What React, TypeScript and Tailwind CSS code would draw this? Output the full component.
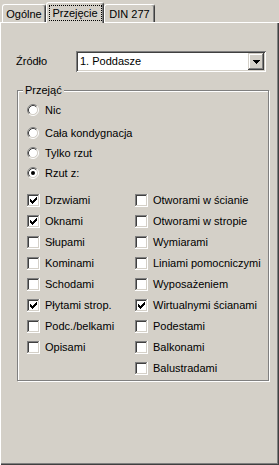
import type { ReactNode } from "react";

const LEFT = [
  { label: "Drzwiami", on: true },
  { label: "Oknami", on: true },
  { label: "Słupami", on: false },
  { label: "Kominami", on: false },
  { label: "Schodami", on: false },
  { label: "Płytami strop.", on: true },
  { label: "Podc./belkami", on: false },
  { label: "Opisami", on: false },
];

const RIGHT = [
  { label: "Otworami w ścianie", on: false },
  { label: "Otworami w stropie", on: false },
  { label: "Wymiarami", on: false },
  { label: "Liniami pomocniczymi", on: false },
  { label: "Wyposażeniem", on: false },
  { label: "Wirtualnymi ścianami", on: true },
  { label: "Podestami", on: false },
  { label: "Balkonami", on: false },
  { label: "Balustradami", on: false },
];

const CHECK_COLS: [number, number][] = [
  [3, 5],
  [4, 6],
  [5, 7],
  [6, 6],
  [7, 5],
  [8, 4],
  [9, 3],
];

function CheckBox({ on }: { on: boolean }) {
  return (
    <svg width="13" height="13" viewBox="0 0 13 13" className="shrink-0" shapeRendering="crispEdges">
      <rect x="0" y="0" width="13" height="13" fill="#ffffff" />
      <path d="M0 0.5H12M0.5 0V12" stroke="#808080" />
      <path d="M1 1.5H11M1.5 1V11" stroke="#404040" />
      <path d="M1 11.5H12M11.5 1V12" stroke="#d4d0c8" />
      <path d="M0 12.5H13M12.5 0V13" stroke="#ffffff" />
      {on && CHECK_COLS.map(([x, y]) => <rect key={x} x={x} y={y} width="1" height="3" fill="#000" />)}
    </svg>
  );
}

function Radio({ on }: { on: boolean }) {
  return (
    <svg width="12" height="12" viewBox="0 0 12 12" className="shrink-0">
      <circle cx="6" cy="6" r="4.5" fill="#ffffff" />
      <path d="M2.11 9.89A5.5 5.5 0 0 1 9.89 2.11" stroke="#808080" fill="none" />
      <path d="M2.82 9.18A4.5 4.5 0 0 1 9.18 2.82" stroke="#404040" fill="none" />
      <path d="M9.89 2.11A5.5 5.5 0 0 1 2.11 9.89" stroke="#ffffff" fill="none" />
      <path d="M9.18 2.82A4.5 4.5 0 0 1 2.82 9.18" stroke="#d4d0c8" fill="none" />
      {on && <circle cx="6" cy="6" r="2" fill="#000" />}
    </svg>
  );
}

function RadioRow({ label, on, className }: { label: string; on?: boolean; className?: string }) {
  return (
    <div className={`flex h-[20px] items-center gap-[6px] ${className ?? ""}`}>
      <Radio on={!!on} />
      <span>{label}</span>
    </div>
  );
}

function CheckRow({ label, on }: { label: string; on: boolean }) {
  return (
    <div className="flex h-[21px] items-center gap-[5px] whitespace-nowrap">
      <CheckBox on={on} />
      <span>{label}</span>
    </div>
  );
}

function Tab({ children, selected, w }: { children: ReactNode; selected?: boolean; w: string }) {
  return (
    <div
      className={
        selected
          ? `relative z-10 mb-[-1px] flex h-[21px] ${w} items-center justify-center rounded-t-[3px] border-l border-t border-r border-l-white border-t-white border-r-[#404040] bg-[#d4d0c8] shadow-[inset_-1px_0_#808080]`
          : `flex h-[18px] ${w} items-center justify-center rounded-t-[3px] border-l border-t border-r border-l-white border-t-white border-r-[#404040] pt-[1px] shadow-[inset_-1px_0_#808080]`
      }
    >
      {children}
    </div>
  );
}

export default function App() {
  return (
    <div
      className="flex h-[465px] w-[279px] flex-col bg-[#d4d0c8] text-[11px] leading-none text-black"
      style={{ fontFamily: '"Liberation Sans", Arial, sans-serif' }}
    >
      <div className="flex h-[22px] shrink-0 items-end pl-[2px]">
        <Tab w="w-[44px]">Ogólne</Tab>
        <Tab w="w-[58px]" selected>
          <span className="flex h-[16px] w-[53px] items-center justify-center border border-dotted border-black">
            Przejęcie
          </span>
        </Tab>
        <Tab w="w-[51px]">DIN 277</Tab>
      </div>

      <div className="flex flex-1 flex-col border-l border-t border-l-white border-t-white shadow-[inset_-1px_-1px_#404040,inset_-2px_-2px_#808080]">
        <div className="mt-[28px] flex items-center pl-[15px]">
          <span className="w-[60px]">Źródło</span>
          <div className="flex h-[21px] w-[190px] items-stretch bg-white p-[2px] shadow-[inset_1px_1px_#808080,inset_-1px_-1px_#ffffff,inset_2px_2px_#404040,inset_-2px_-2px_#d4d0c8]">
            <div className="flex flex-1 items-center pl-[2px]">1. Poddasze</div>
            <div className="flex w-[16px] items-center justify-center bg-[#d4d0c8] shadow-[inset_-1px_-1px_#404040,inset_1px_1px_#d4d0c8,inset_-2px_-2px_#808080,inset_2px_2px_#ffffff]">
              <svg width="7" height="4" viewBox="0 0 7 4" shapeRendering="crispEdges">
                <path d="M0 0H7L3.5 4Z" fill="#000" />
              </svg>
            </div>
          </div>
        </div>

        <div className="relative ml-[16px] mt-[18px] h-[291px] w-[252px] border border-[#808080] pl-[9px] pt-[9px] shadow-[inset_1px_1px_#ffffff,1px_1px_#ffffff]">
          <span className="absolute left-[5px] top-[-6px] bg-[#d4d0c8] px-[2px]">Przejąć</span>
          <RadioRow label="Nic" />
          <RadioRow label="Cała kondygnacja" className="mt-[3px]" />
          <RadioRow label="Tylko rzut" />
          <RadioRow label="Rzut z:" on />
          <div className="mt-[7px] grid grid-cols-[108px_1fr]">
            <div className="flex flex-col">
              {LEFT.map((c) => (
                <CheckRow key={c.label} label={c.label} on={c.on} />
              ))}
            </div>
            <div className="flex flex-col">
              {RIGHT.map((c) => (
                <CheckRow key={c.label} label={c.label} on={c.on} />
              ))}
            </div>
          </div>
        </div>
      </div>
    </div>
  );
}
